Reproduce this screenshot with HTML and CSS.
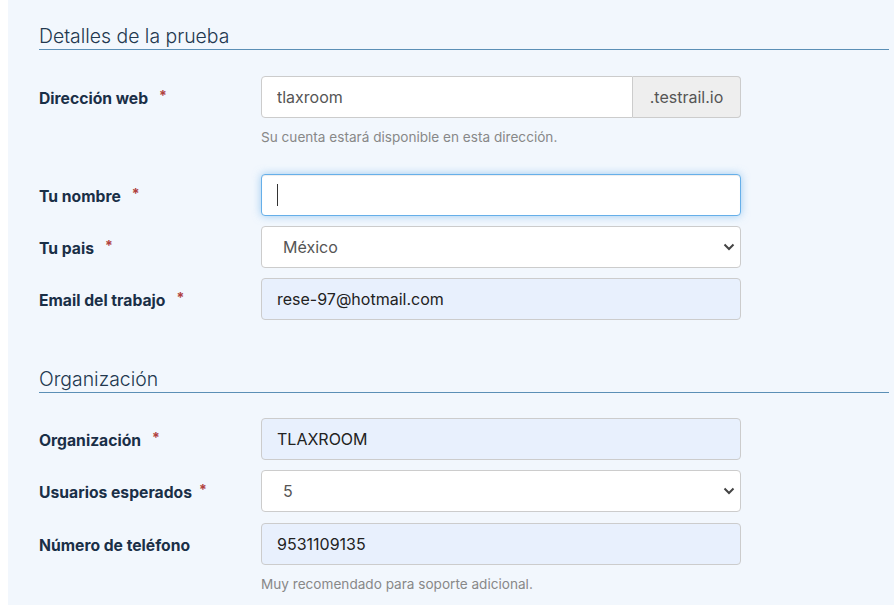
FILE: index.html
```html
<!DOCTYPE html>
<html lang="es">
<head>
<meta charset="utf-8">
<title>Prueba</title>
<link rel="stylesheet" href="styles.css">
</head>
<body>
<div class="panel">
  <section class="section">
    <h2 class="section-title">Detalles de la prueba</h2>
    <div class="row">
      <label class="label">Dirección web<span class="req">*</span></label>
      <div class="field">
        <div class="group">
          <input class="input group-input" type="text" value="tlaxroom">
          <span class="addon">.testrail.io</span>
        </div>
        <p class="help">Su cuenta estará disponible en esta dirección.</p>
      </div>
    </div>
    <div class="row row-spaced">
      <label class="label">Tu nombre<span class="req">*</span></label>
      <div class="field">
        <div class="focus-wrap">
          <input class="input input-focus" type="text" value="">
          <span class="caret"></span>
        </div>
      </div>
    </div>
    <div class="row">
      <label class="label">Tu pais<span class="req">*</span></label>
      <div class="field">
        <div class="select-wrap">
          <select class="input select"><option>México</option></select>
          <svg class="chev" width="12" height="8" viewBox="0 0 12 8"><path d="M1.5 1.5 L6 6 L10.5 1.5" fill="none" stroke="#444" stroke-width="2"/></svg>
        </div>
      </div>
    </div>
    <div class="row">
      <label class="label">Email del trabajo<span class="req">*</span></label>
      <div class="field">
        <input class="input input-auto" type="text" value="rese-97@hotmail.com">
      </div>
    </div>
  </section>

  <section class="section section-2">
    <h2 class="section-title">Organización</h2>
    <div class="row">
      <label class="label">Organización<span class="req">*</span></label>
      <div class="field">
        <input class="input input-auto" type="text" value="TLAXROOM">
      </div>
    </div>
    <div class="row">
      <label class="label">Usuarios esperados<span class="req req-tight">*</span></label>
      <div class="field">
        <div class="select-wrap">
          <select class="input select"><option>5</option></select>
          <svg class="chev" width="12" height="8" viewBox="0 0 12 8"><path d="M1.5 1.5 L6 6 L10.5 1.5" fill="none" stroke="#444" stroke-width="2"/></svg>
        </div>
      </div>
    </div>
    <div class="row row-phone">
      <label class="label">Número de teléfono</label>
      <div class="field">
        <input class="input input-auto" type="text" value="9531109135">
        <p class="help">Muy recomendado para soporte adicional.</p>
      </div>
    </div>
  </section>
</div>
</body>
</html>
```
FILE: styles.css
```css
* { box-sizing: border-box; }
html, body { margin: 0; padding: 0; background: #ffffff; }
body { font-family: Inter, Roboto, "Liberation Sans", sans-serif; }

.panel {
  margin-left: 8px;
  min-height: 605px;
  background: #f2f7fd;
  padding: 23px 5px 0 31px;
}

.section-title {
  margin: 0;
  font-size: 19.4px;
  line-height: 23px;
  font-weight: 300;
  color: #22384f;
  padding: 2px 0 1px;
  border-bottom: 1px solid #5b8fb6;
}

.section-2 { margin-top: 46px; }

.row {
  display: flex;
  align-items: flex-start;
  margin-top: 10px;
}
.section-title + .row { margin-top: 26px; }
.section-2 .section-title + .row { margin-top: 25px; }
.row-spaced { margin-top: 28px; }
.row-phone { margin-top: 11px; }

.label {
  width: 222px;
  flex: none;
  height: 42px;
  padding-top: 2px;
  display: flex;
  align-items: center;
  font-size: 15.7px;
  font-weight: 700;
  color: #1a2f47;
}
.req {
  color: #b0413e;
  font-size: 14px;
  margin-left: 11px;
  position: relative;
  top: -3px;
}
.req-tight { margin-left: 7px; }

.field { width: 480px; flex: none; }

.input {
  display: block;
  width: 100%;
  height: 42px;
  margin: 0;
  padding: 0 15px;
  font-family: inherit;
  font-size: 16px;
  color: #555555;
  background: #ffffff;
  border: 1px solid #cccccc;
  border-radius: 4px;
  outline: none;
}
.input-auto { background: #e8f0fd; color: #222222; }

.group { display: flex; }
.group-input {
  flex: 1;
  width: auto;
  border-radius: 4px 0 0 4px;
}
.addon {
  flex: none;
  width: 108px;
  height: 42px;
  display: flex;
  align-items: center;
  justify-content: center;
  font-size: 16px;
  color: #555555;
  background: #eeeeee;
  border: 1px solid #cccccc;
  border-left: none;
  border-radius: 0 4px 4px 0;
}

.help {
  margin: 10px 0 0;
  font-size: 13.6px;
  line-height: 18px;
  color: #888888;
}

.focus-wrap, .select-wrap { position: relative; }
.input-focus {
  border-color: #66afe9;
  box-shadow: inset 0 1px 1px rgba(0,0,0,.075), 0 0 8px rgba(102,175,233,.6);
}
.caret {
  position: absolute;
  left: 16px;
  top: 10px;
  width: 1px;
  height: 22px;
  background: #333333;
}

.select {
  appearance: none;
  -webkit-appearance: none;
  padding-left: 21px;
}
.chev {
  position: absolute;
  right: 6px;
  top: 17px;
  pointer-events: none;
}
```
